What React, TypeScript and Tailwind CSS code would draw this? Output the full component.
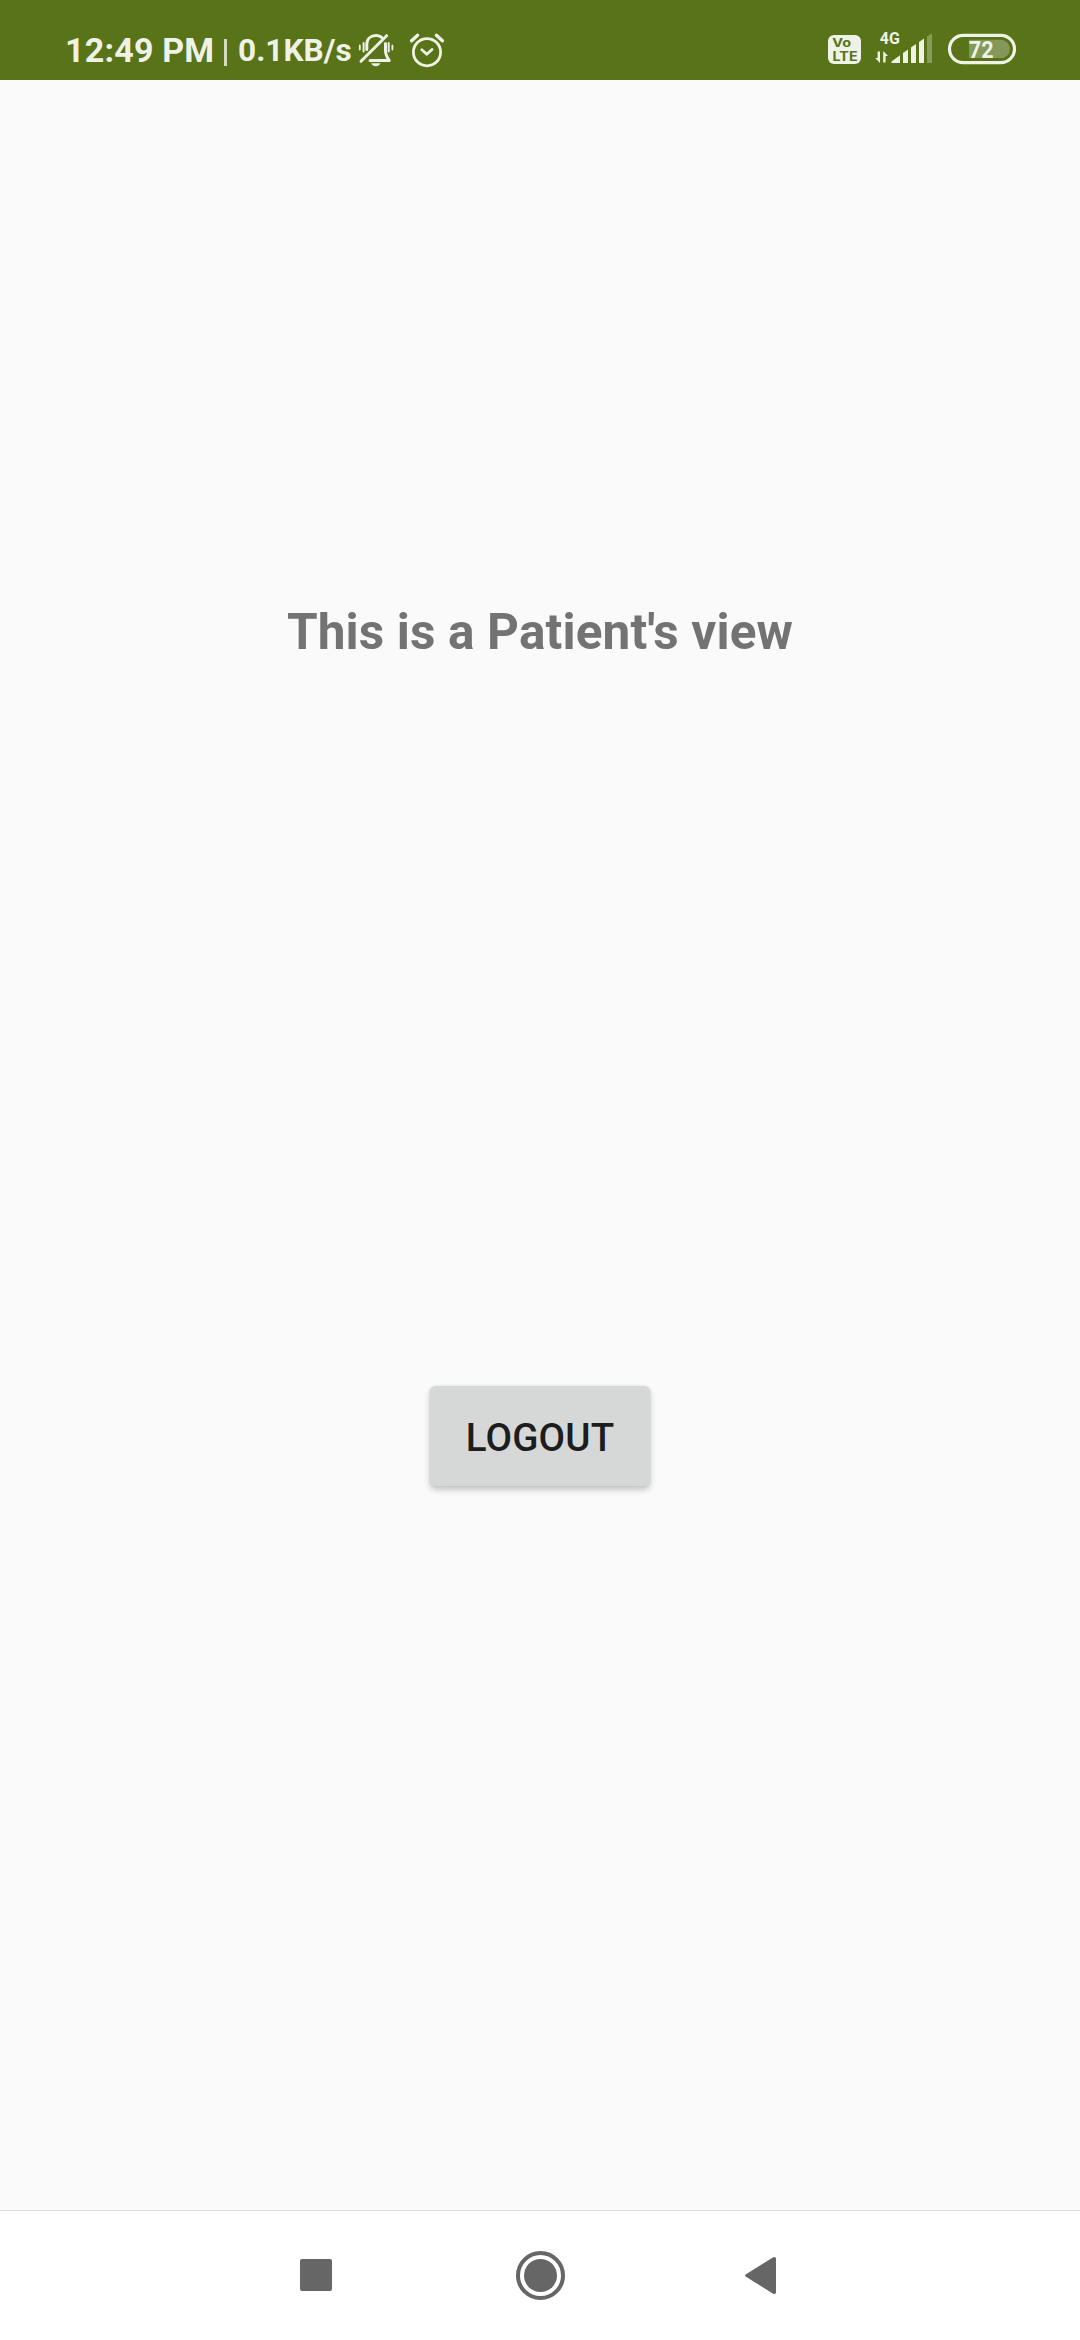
const INK = '#eff2e6';
const BAR = '#587318';

function BellOff() {
  return (
    <svg className="block h-[36px] w-[38px]" viewBox="357 32 38 36" fill="none" stroke={INK} strokeWidth="3" strokeLinecap="round">
      <path d="M366.8 49.5V44.5C366.8 39 370.5 35.6 376 35.6C378.2 35.6 380 36.2 381.5 37.3" />
      <path d="M385.5 43.5V51C385.5 55 387 57 389.3 60.6H370" strokeLinejoin="round" />
      <path d="M361 61.3L386.6 35.7" />
      <path d="M363.6 43V51.5M388.7 43V51.5" strokeWidth="2" />
      <path d="M359.8 45.5V49.5M392.4 45.5V49.5" strokeWidth="1.8" />
      <path d="M371 63.2H380.6C379.5 65.2 378 66.2 375.8 66.2S372.1 65.2 371 63.2Z" fill={INK} stroke="none" />
    </svg>
  );
}

function Alarm() {
  return (
    <svg className="block h-[36px] w-[38px]" viewBox="408 32 38 36" fill="none" stroke={INK} strokeLinecap="round" strokeLinejoin="round">
      <circle cx="427" cy="52.2" r="13.6" strokeWidth="2.8" />
      <path d="M411.6 40.8L417.6 35.2M436.4 35.2L442.4 40.8" strokeWidth="3.4" />
      <path d="M421.8 49.7L426.8 54.3L432 49.5" strokeWidth="2.8" />
    </svg>
  );
}

function Volte() {
  return (
    <div className="mt-[35px] h-[29px] w-[33px] rounded-[6px] bg-[#eff2e6] font-['Inter',sans-serif]">
      <svg className="block h-[29px] w-[33px] overflow-visible" viewBox="828 35 33 29" fill={BAR}>
        <text x="832.3" y="47.2" fontSize="12" fontWeight="700" textLength="18.8" lengthAdjust="spacingAndGlyphs">Vo</text>
        <text x="832.6" y="60.5" fontSize="13" fontWeight="700" textLength="25" lengthAdjust="spacingAndGlyphs">LTE</text>
      </svg>
    </div>
  );
}

function Signal() {
  return (
    <svg className="block h-[43px] w-[58px]" viewBox="875 24 58 43" fill={INK}>
      <text x="879.8" y="43.7" fontSize="16.6" fontWeight="700" textLength="20" lengthAdjust="spacingAndGlyphs">4G</text>
      <path d="M877.6 51.5H880V63L875.2 58H877.6ZM883.2 51L888 56H885.6V62.5H883.2Z" />
      <path d="M891.5 63V61.5L900 55.3V63Z" />
      <path d="M903 63V53L908 49.5V63Z" />
      <path d="M911 63V47.5L916 44V63Z" />
      <path d="M919 63V42L924 38.5V63Z" />
      <path d="M927 63V36.5L932 33.5V63Z" opacity=".32" />
    </svg>
  );
}

function Battery() {
  return (
    <svg className="block h-[32px] w-[70px]" viewBox="947 33 70 32" fill="none">
      <rect x="949.5" y="35.4" width="65" height="27.2" rx="13.6" stroke={INK} strokeWidth="3.2" />
      <path d="M969 39.7H1000.7A9.2 9.2 0 0 1 1000.7 58.1H969Z" fill="#849859" />
      <text x="968.8" y="57.6" fontSize="24" fontWeight="700" fill={INK} textLength="24.8" lengthAdjust="spacingAndGlyphs">72</text>
    </svg>
  );
}

function StatusBar() {
  return (
    <header className="flex h-[80px] shrink-0 justify-between bg-[#587318] pr-[63px] pl-[65px] text-[#eff2e6]">
      <div className="flex items-start">
        <span className="mt-[30px] w-[159px] text-[34px] leading-[40px] font-bold tracking-[0.2px] whitespace-nowrap">12:49 PM</span>
        <span className="mt-[39px] h-[27px] w-[3px] bg-[#d3dcc0]" />
        <span className="mt-[31px] ml-[11px] w-[119px] text-[31.6px] leading-[40px] font-bold whitespace-nowrap">0.1KB/s</span>
        <div className="mt-[32px] flex gap-[13px]">
          <BellOff />
          <Alarm />
        </div>
      </div>
      <div className="flex items-start">
        <Volte />
        <div className="mt-[24px] ml-[14px]"><Signal /></div>
        <div className="mt-[33px] ml-[14px]"><Battery /></div>
      </div>
    </header>
  );
}

function NavBar() {
  return (
    <nav className="flex h-[130px] shrink-0 items-center border-t border-[#dfdfdf] bg-white pb-px pl-[300px] text-[#666666]">
      <span className="h-[32px] w-[32px] rounded-[2px] bg-[#666666]" />
      <svg className="mt-[1px] ml-[184px] h-[49px] w-[49px]" viewBox="0 0 49 49">
        <circle cx="24.5" cy="24.5" r="22.5" fill="none" stroke="currentColor" strokeWidth="4" />
        <circle cx="24.5" cy="24.5" r="16.5" fill="currentColor" />
      </svg>
      <svg className="mt-[1px] ml-[180px] h-[37px] w-[31px]" viewBox="0 0 31 37" fill="currentColor">
        <path d="M1 17.2L27.8 .6Q31 -.9 31 2V35Q31 37.9 27.8 36.4L1 19.8Q-1 18.5 1 17.2Z" />
      </svg>
    </nav>
  );
}

export default function App() {
  return (
    <div className="flex h-[2340px] w-[1080px] flex-col bg-[#fafafa] font-['Roboto',sans-serif]">
      <StatusBar />
      <main className="flex flex-1 flex-col items-center pt-[522px]">
        <h1 className="text-[49.5px] leading-[60px] font-bold tracking-[0.14px] whitespace-nowrap text-[#737373]">This is a Patient's view</h1>
        <button className="mt-[724px] h-[100px] w-[220px] rounded-[5.5px] bg-[#d6d8d7] pt-[2px] text-[38.5px] leading-[45px] font-medium tracking-[0.2px] text-[#1d1d1d] shadow-[0_4px_6px_rgba(0,0,0,0.2),0_0_3px_rgba(0,0,0,0.1)]">
          LOGOUT
        </button>
      </main>
      <NavBar />
    </div>
  );
}
